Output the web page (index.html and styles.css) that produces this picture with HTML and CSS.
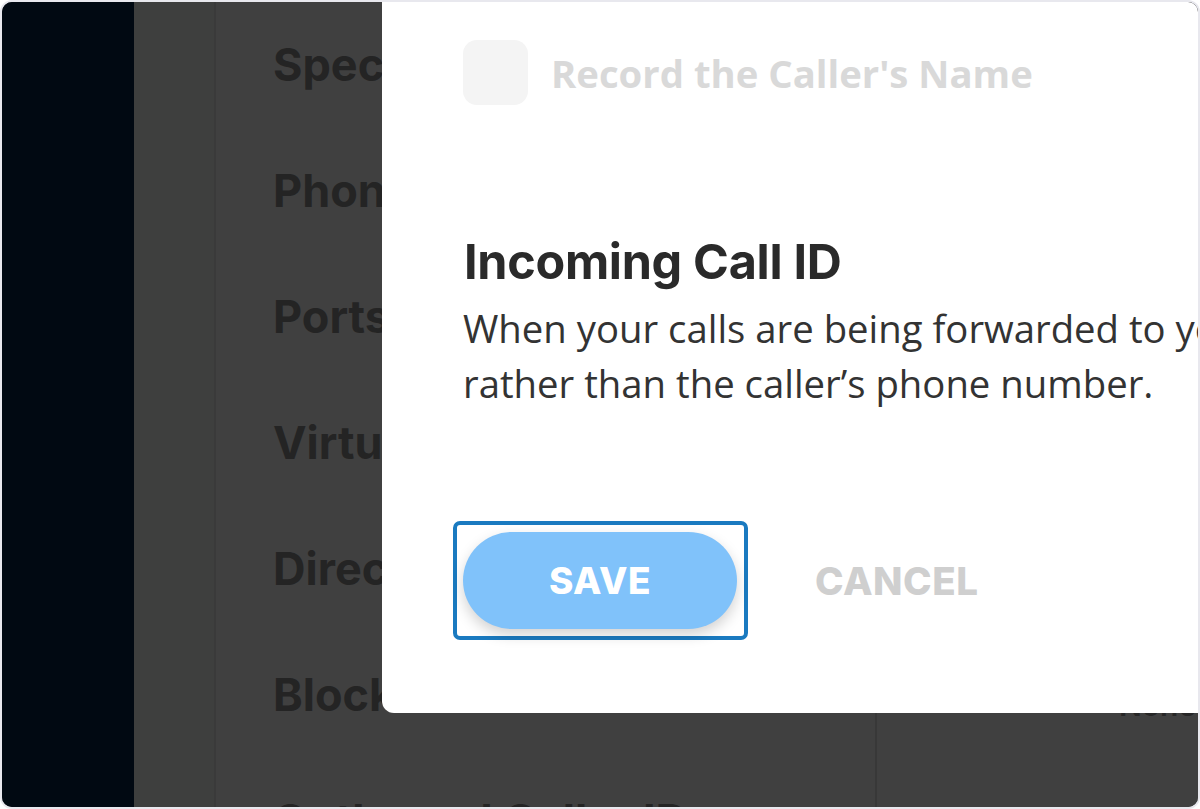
FILE: index.html
```html
<!DOCTYPE html>
<html lang="en">
<head>
<meta charset="utf-8">
<title>Incoming Call ID</title>
<link rel="stylesheet" href="styles.css">
</head>
<body>
<div class="frame">
  <aside class="nav"></aside>
  <div class="sub"></div>
  <main class="content">
    <ul class="menu">
      <li>Special Features</li>
      <li>Phone Numbers</li>
      <li>Ports</li>
      <li>Virtual Receptionist</li>
      <li>Directory</li>
      <li>Blocked Numbers</li>
      <li>Outbound Caller ID</li>
    </ul>
    <div class="panel">
      <span class="panel-text">None</span>
    </div>
  </main>
  <div class="modal">
    <label class="check-row">
      <span class="checkbox"></span>
      <span class="check-label">Record the Caller's Name</span>
    </label>
    <h2 class="title">Incoming Call ID</h2>
    <p class="desc"><span class="line">When your calls are being forwarded to your phone, show your business number</span><span class="line">rather than the caller’s phone number.</span></p>
    <div class="actions">
      <div class="focus-ring"><button class="btn-save">SAVE</button></div>
      <button class="btn-cancel">CANCEL</button>
    </div>
  </div>
</div>
</body>
</html>
```

FILE: styles.css
```css
* { box-sizing: border-box; }
html, body {
  margin: 0;
  padding: 0;
  background: #ffffff;
  overflow: hidden;
}
.frame {
  position: relative;
  width: 1200px;
  height: 809px;
  border: 2px solid #e8e8ee;
  border-radius: 12px;
  overflow: hidden;
  display: flex;
  background: #404040;
}
.nav {
  width: 132px;
  flex: none;
  background: #010912;
}
.sub {
  width: 82px;
  flex: none;
  background: #3e3f3e;
  border-right: 2px solid #3a3a3a;
}
.content {
  flex: 1;
  display: flex;
  background: #404040;
}
.menu {
  list-style: none;
  margin: 0;
  padding: 0 0 0 57px;
  width: 661px;
  flex: none;
  border-right: 2px solid #383838;
}
.menu li {
  font-family: "Inter", "Lato", "Liberation Sans", sans-serif;
  font-weight: 700;
  font-size: 45px;
  line-height: 126px;
  color: #242424;
  white-space: nowrap;
}
.panel {
  flex: 1;
  padding: 683px 0 0 242px;
}
.panel-text {
  font-family: "Inter", "Liberation Sans", sans-serif;
  font-weight: 600;
  font-size: 30px;
  line-height: 40px;
  color: #262626;
}
.modal {
  position: absolute;
  left: 380px;
  top: -100px;
  width: 1000px;
  height: 811px;
  background: #ffffff;
  border-radius: 12px;
  padding: 138px 0 0 81px;
  display: flex;
  flex-direction: column;
  align-items: flex-start;
}
.check-row {
  display: flex;
  align-items: center;
  gap: 23px;
}
.checkbox {
  width: 65px;
  height: 65px;
  border-radius: 14px;
  background: #f4f4f4;
}
.check-label {
  font-family: "Open Sans", "Liberation Sans", sans-serif;
  font-weight: 700;
  font-size: 38.3px;
  color: #d9d9d9;
  white-space: nowrap;
}
.title {
  margin: 129px 0 0 1px;
  font-family: "Inter", "Lato", "Liberation Sans", sans-serif;
  font-weight: 700;
  font-size: 48.5px;
  line-height: 56px;
  letter-spacing: -0.3px;
  color: #2a2a2a;
}
.desc {
  margin: 11px 0 0 0;
  font-family: "Open Sans", "Liberation Sans", sans-serif;
  font-size: 38.3px;
  line-height: 55px;
  color: #333333;
}
.desc .line {
  display: block;
  white-space: nowrap;
}
.actions {
  margin-top: 110px;
  margin-left: -10px;
  display: flex;
  align-items: center;
  gap: 67px;
}
.focus-ring {
  border: 4px solid #1a7ac0;
  border-radius: 7px;
  padding: 7px 7px 7px 6px;
}
.btn-save {
  display: block;
  width: 274px;
  height: 97px;
  border: none;
  border-radius: 49px;
  background: #80c2fa;
  color: #ffffff;
  font-family: "Inter", "Lato", "Liberation Sans", sans-serif;
  font-weight: 800;
  font-size: 37px;
  letter-spacing: 0.5px;
  box-shadow: 0 6px 14px rgba(0, 0, 0, 0.18);
}
.btn-cancel {
  border: none;
  background: none;
  padding: 0;
  color: #cfcfcf;
  font-family: "Inter", "Lato", "Liberation Sans", sans-serif;
  font-weight: 800;
  font-size: 38.5px;
  letter-spacing: 0.5px;
}
```
